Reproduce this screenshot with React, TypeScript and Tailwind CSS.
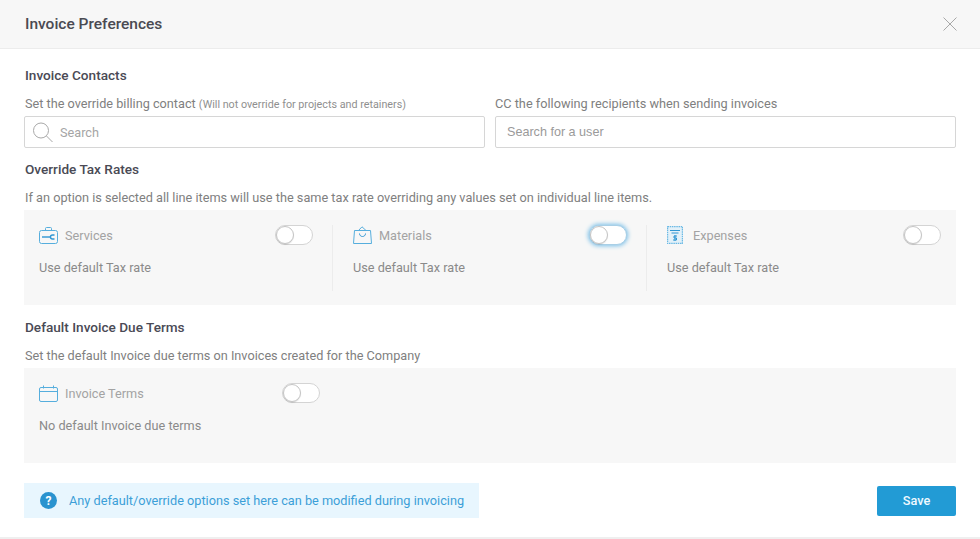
import React from 'react';

const font = "font-['Roboto',_'Liberation_Sans',_sans-serif]";

const SearchIcon = () => (
  <svg width="21" height="21" viewBox="0 0 21 21" fill="none" stroke="#a8a8a8" strokeWidth="1">
    <circle cx="8" cy="8.500" r="7.500" />
    <path d="M13.500 14l6 6" />
  </svg>
);

const CloseIcon = () => (
  <svg width="14" height="14" viewBox="0 0 14 14" fill="none" stroke="#a8a8a8" strokeWidth="1">
    <path d="M0.500 0.500l13 13M13.500 0.500l-13 13" />
  </svg>
);

const ServicesIcon = () => (
  <svg width="19" height="17" viewBox="0 0 19 17" fill="none" stroke="#56aedd" strokeWidth="1">
    <rect x="0.500" y="3.500" width="18" height="13" rx="2" />
    <path d="M6.500 3.500V1.500a1 1 0 0 1 1-1h4a1 1 0 0 1 1 1v2" />
    <path d="M3 10h8" stroke="#2f96d3" strokeWidth="1.400" />
    <path d="M15.500 8h-2a2 2 0 0 0 0 4h2" stroke="#2f96d3" strokeWidth="1.400" />
  </svg>
);

const MaterialsIcon = () => (
  <svg width="19" height="18" viewBox="0 0 19 18" fill="none" stroke="#56aedd" strokeWidth="1">
    <path d="M1.500 4.500h16l1 13H0.500z" />
    <path d="M5.500 4.500 9 0.800l4 3.700" />
    <path d="M6.500 7.500c0 4 6 4 6 0" stroke="#2f96d3" />
  </svg>
);

const ExpensesIcon = () => (
  <svg width="16" height="18" viewBox="0 0 16 18" fill="none" stroke="#6bb9e4" strokeWidth="1">
    <rect x="0.500" y="0.500" width="15" height="17" fill="#e3f1f9" strokeWidth="1.400" strokeDasharray="1.500 0.700" />
    <path d="M3 4.500h10M4.500 7h7" stroke="#2f96d3" strokeWidth="1.200" />
    <path d="M10 10H7v2h2.500v2H6M8 9v6" stroke="#2f96d3" />
  </svg>
);

const CalendarIcon = () => (
  <svg width="19" height="17" viewBox="0 0 19 17" fill="none" stroke="#56aedd" strokeWidth="1">
    <rect x="0.500" y="2.500" width="18" height="14" rx="1.500" />
    <path d="M0.500 6.500h18" />
    <path d="M4.500 0.500v3M14.500 0.500v3" />
  </svg>
);

const Toggle = ({ focused = false }: { focused?: boolean }) => (
  <div
    className={`flex h-[20px] w-[38px] items-center rounded-full border bg-white ${
      focused ? "border-[#a9cfe6] shadow-[0_0_4px_1px_#7cc0e8]" : "border-[#d4d4d4]"
    }`}
  >
    <div className="h-[18px] w-[18px] rounded-full border border-[#c4c4c4] bg-white shadow-[0_1px_1px_rgba(0,0,0,0.1)]" />
  </div>
);

interface OptionProps {
  icon: React.ReactNode;
  label: string;
  value: string;
  focused?: boolean;
}

const Option = ({ icon, label, value, focused }: OptionProps) => (
  <div className="pl-[15px]">
    <div className="flex h-[20px] items-center justify-between">
      <div className="flex items-center">
        <div className="flex w-[26px] items-center">{icon}</div>
        <span className="pt-[1px] text-[12.7px] text-[#a3a3a3]">{label}</span>
      </div>
      <Toggle focused={focused} />
    </div>
    <p className="mt-[13px] text-[12.7px] leading-[20px] text-[#8a8a8a]">{value}</p>
  </div>
);

const App = () => {
  return (
    <div className={`${font} relative h-[539px] w-[980px] overflow-hidden bg-white`}>
      {/* Header */}
      <div className="flex h-[49px] items-center justify-between border-b border-[#ececec] bg-[#f7f7f7] pl-[25px] pr-[23px]">
        <h1 className="pt-[1px] text-[15.5px] font-medium text-[#4a4a52]">Invoice Preferences</h1>
        <CloseIcon />
      </div>

      <div className="px-[24px]">
        {/* Invoice contacts */}
        <h2 className="mt-[16px] h-[20px] pl-px text-[13.6px] font-medium leading-[20px] text-[#4a4a55]">Invoice Contacts</h2>
        <div className="mt-[9px] flex gap-[10px]">
          <div className="flex-1">
            <p className="h-[22px] pl-px text-[12.7px] leading-[20px] text-[#808080]">
              Set the override billing contact{" "}
              <span className="text-[10.75px] text-[#8f8f8f]">(Will not override for projects and retainers)</span>
            </p>
            <div className="flex h-[32px] items-center rounded-[2px] border border-[#d6d6d6] bg-white pl-[8px]">
              <SearchIcon />
              <span className="ml-[6px] pt-[1px] text-[12.7px] text-[#a5a5a5]">Search</span>
            </div>
          </div>
          <div className="flex-1">
            <p className="h-[22px] text-[12.72px] leading-[20px] text-[#808080]">CC the following recipients when sending invoices</p>
            <div className="flex h-[32px] items-center rounded-[2px] border border-[#d6d6d6] bg-white pl-[11px]">
              <span className="font-['Liberation_Sans',_sans-serif] text-[12.6px] text-[#9a9a9a]">Search for a user</span>
            </div>
          </div>
        </div>

        {/* Override tax rates */}
        <h2 className="mt-[11px] h-[20px] pl-px text-[13.6px] font-medium leading-[20px] text-[#4a4a55]">Override Tax Rates</h2>
        <p className="mt-[9px] h-[20px] pl-px text-[12.72px] leading-[20px] text-[#808080]">
          If an option is selected all line items will use the same tax rate overriding any values set on individual line items.
        </p>
        <div className="mt-[2px] flex h-[95px] items-start bg-[#f7f7f7] pt-[15px]">
          <div className="mr-[5px] h-[66px] w-[309px] border-r border-[#ececec] pr-[19px]">
            <Option icon={<ServicesIcon />} label="Services" value="Use default Tax rate" />
          </div>
          <div className="mr-[5px] h-[66px] w-[309px] border-r border-[#ececec] pr-[19px]">
            <Option icon={<MaterialsIcon />} label="Materials" value="Use default Tax rate" focused />
          </div>
          <div className="flex-1 pr-[15px]">
            <Option icon={<ExpensesIcon />} label="Expenses" value="Use default Tax rate" />
          </div>
        </div>

        {/* Due terms */}
        <h2 className="mt-[12px] h-[20px] pl-px text-[13.6px] font-medium leading-[20px] text-[#4a4a55]">Default Invoice Due Terms</h2>
        <p className="mt-[9px] h-[20px] pl-px text-[12.7px] leading-[20px] text-[#808080]">
          Set the default Invoice due terms on Invoices created for the Company
        </p>
        <div className="mt-[2px] h-[95px] bg-[#f7f7f7] pt-[15px]">
          <div className="w-[296px]">
            <Option icon={<CalendarIcon />} label="Invoice Terms" value="No default Invoice due terms" />
          </div>
        </div>

        {/* Footer */}
        <div className="mt-[20px] flex items-center justify-between">
          <div className="flex h-[35px] w-[455px] items-center bg-[#e8f6fe] pl-[16px]">
            <div className="flex h-[17px] w-[17px] items-center justify-center rounded-full bg-[#2a93cf] text-[12px] font-bold text-white">?</div>
            <span className="ml-[12px] text-[12.72px] text-[#3c9fd8]">Any default/override options set here can be modified during invoicing</span>
          </div>
          <button className="h-[30px] w-[79px] rounded-[2px] bg-[#229bd5] text-[12.7px] font-medium text-[#f0f9ff]">Save</button>
        </div>
      </div>
      <div className="absolute bottom-0 left-0 right-0 h-[2px] bg-[#efefef]" />
    </div>
  );
};

export default App;
